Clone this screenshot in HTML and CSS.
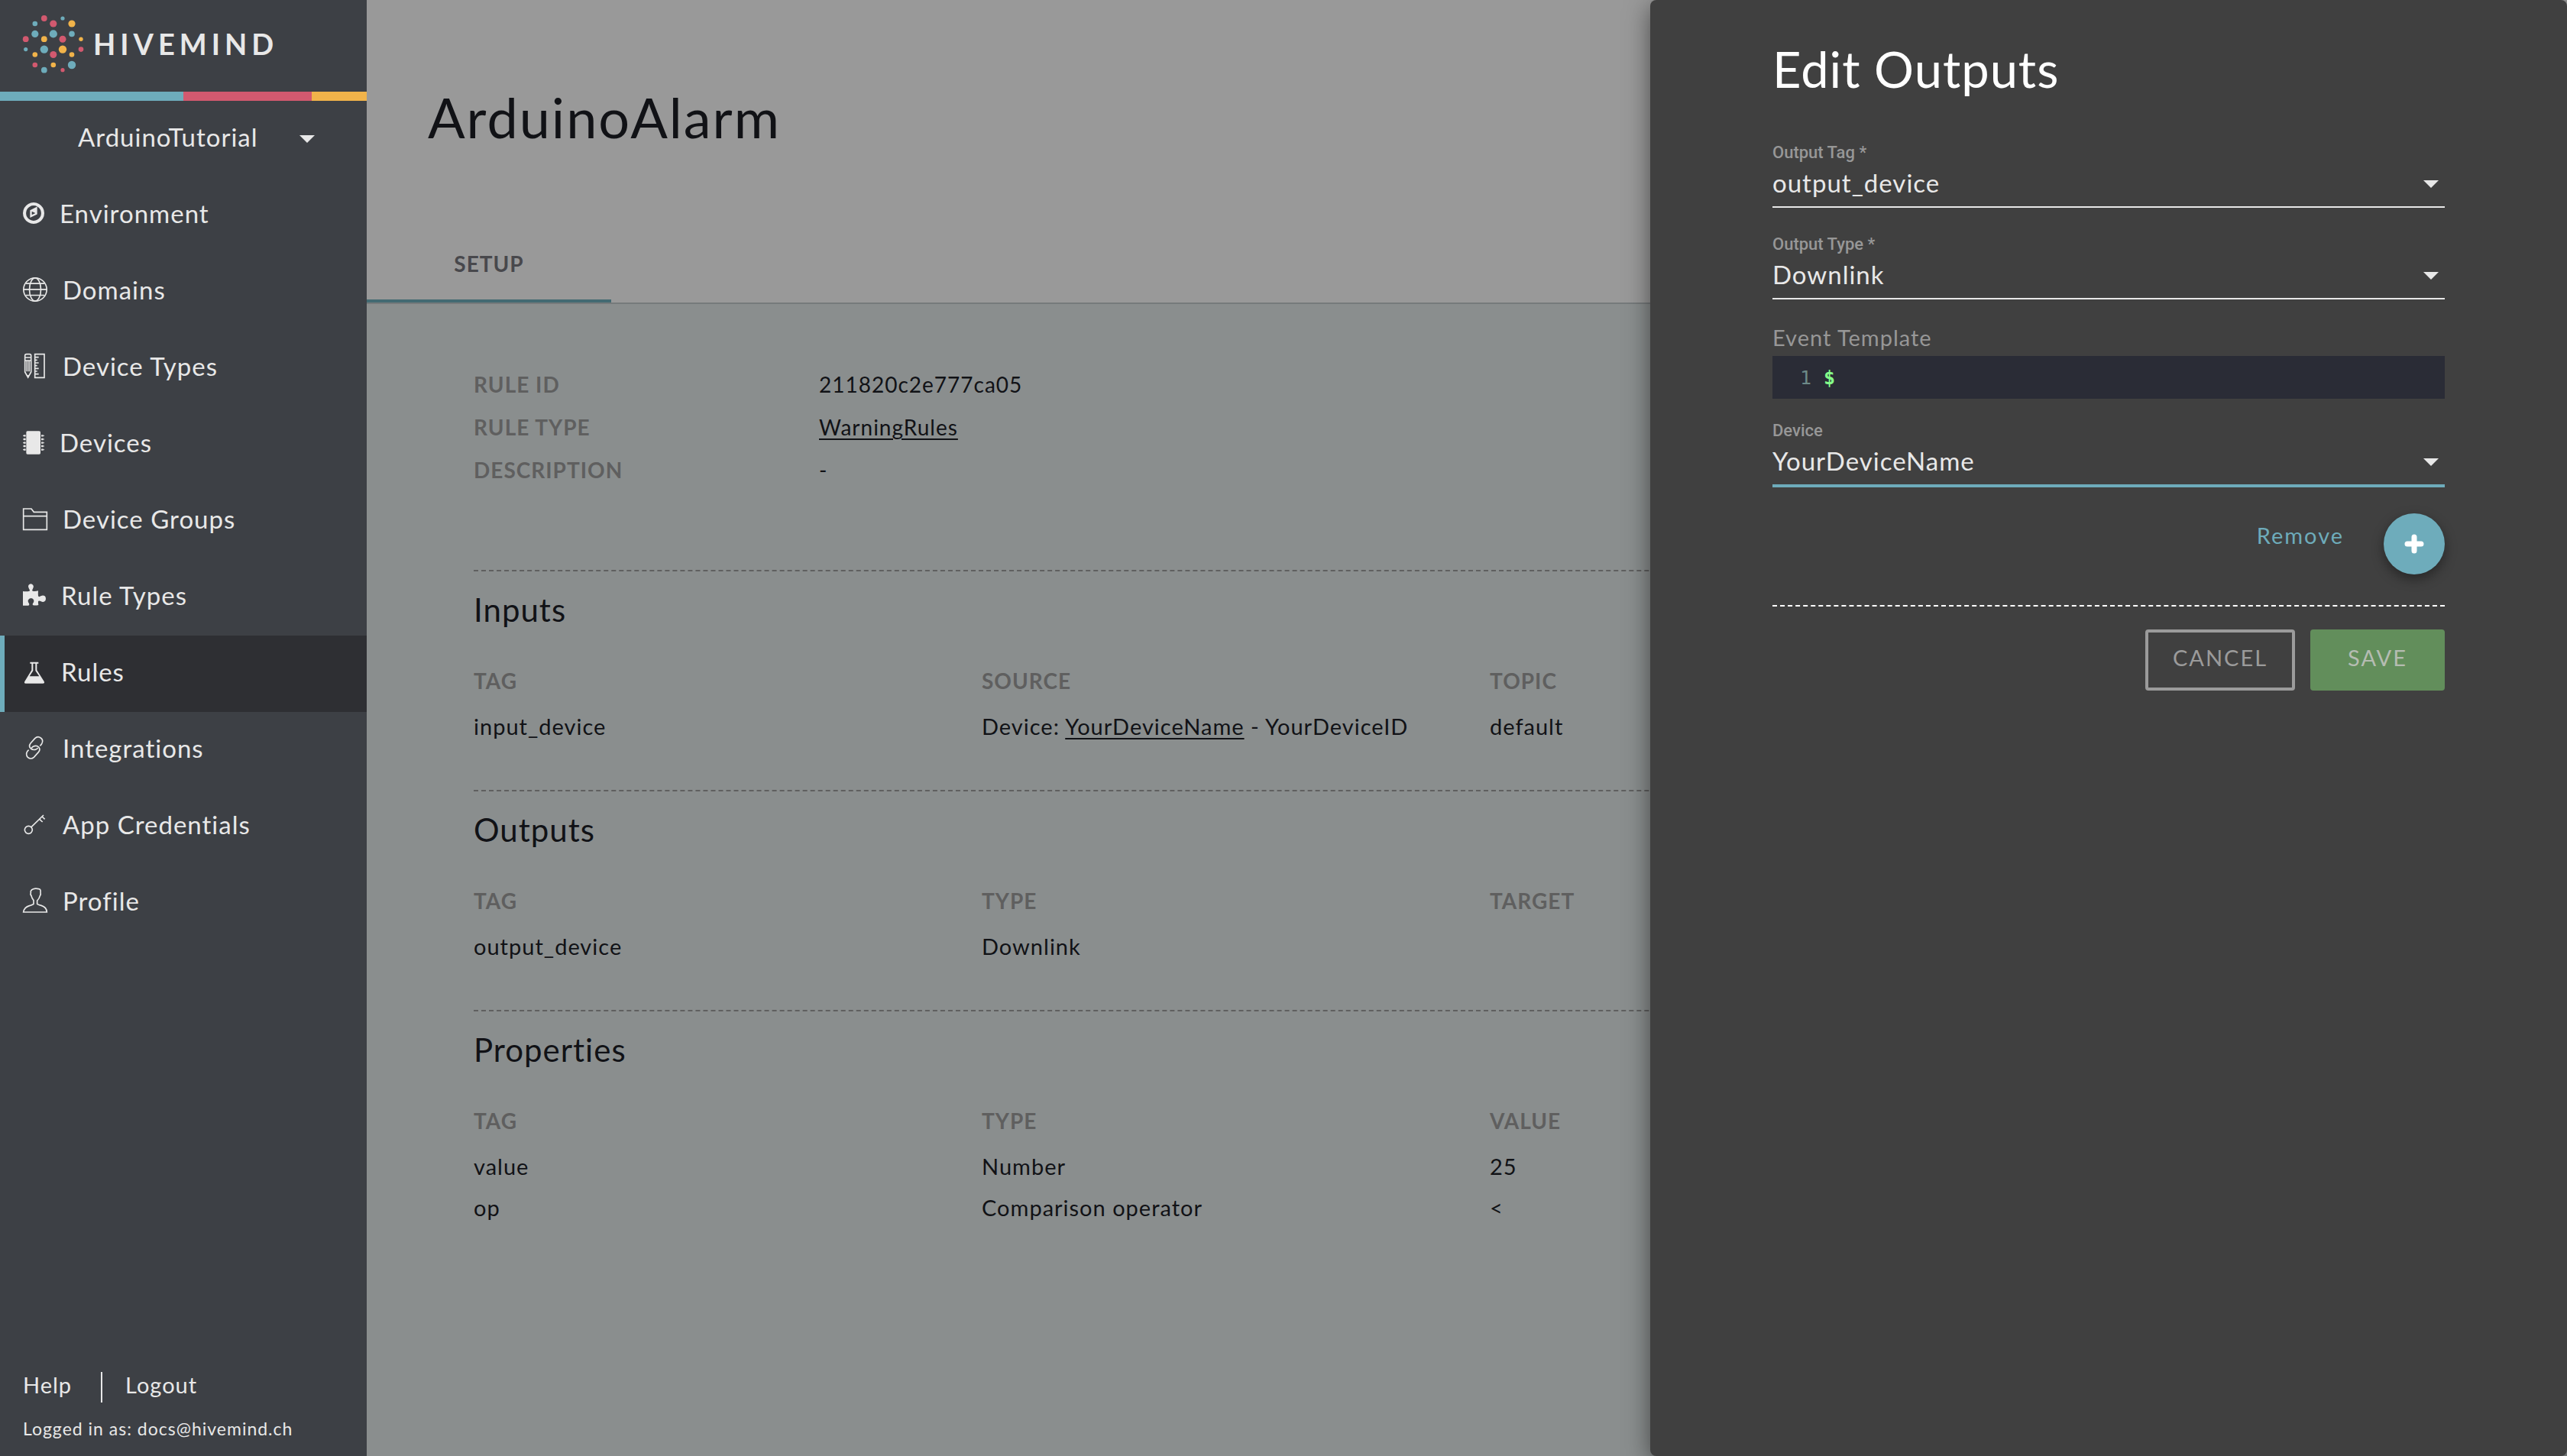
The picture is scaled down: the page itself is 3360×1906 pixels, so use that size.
FILE: index.html
```html
<!DOCTYPE html>
<html lang="en">
<head>
<meta charset="utf-8">
<title>Hivemind – ArduinoAlarm</title>
<link rel="stylesheet" href="styles.css">
</head>
<body>
<div class="app">
  <aside class="sidebar">
    <a class="brand" href="#">
      <svg class="brand-mark" viewBox="29 19 82 78" aria-hidden="true">
        <g fill="#d2596f"><circle cx="57.8" cy="24" r="3.9"/><circle cx="69.8" cy="31" r="4.6"/><circle cx="33.7" cy="51.2" r="3.9"/><circle cx="82" cy="51.2" r="4.5"/><circle cx="106" cy="64.6" r="3.3"/><circle cx="69.8" cy="71.5" r="4.5"/><circle cx="45.8" cy="85" r="3.3"/><circle cx="82" cy="91.7" r="2.6"/></g>
        <g fill="#6eacbb"><circle cx="82" cy="24" r="2.6"/><circle cx="45.8" cy="31" r="3.3"/><circle cx="45.8" cy="44.4" r="4.6"/><circle cx="69.8" cy="44.4" r="5.1"/><circle cx="94" cy="44.4" r="3.8"/><circle cx="33.7" cy="64.6" r="2.6"/><circle cx="57.8" cy="64.6" r="5.2"/><circle cx="94" cy="85" r="5.2"/><circle cx="57.8" cy="91.7" r="3.9"/></g>
        <g fill="#f1b34a"><circle cx="94" cy="31" r="4.6"/><circle cx="57.8" cy="51.2" r="3.9"/><circle cx="106" cy="51.3" r="2.7"/><circle cx="82" cy="64.6" r="5.2"/><circle cx="45.8" cy="71.5" r="3.3"/><circle cx="94" cy="71.5" r="3.3"/><circle cx="69.8" cy="85" r="3.3"/></g>
      </svg>
      <span class="brand-name">HIVEMIND</span>
    </a>
    <div class="stripe"><span class="stripe-teal"></span><span class="stripe-pink"></span><span class="stripe-yellow"></span></div>
    <div class="env">
      <select class="env-select" aria-label="Environment"><option>ArduinoTutorial</option></select>
      <svg class="caret env-caret" viewBox="0 0 20 10" aria-hidden="true"><path d="M0 0h20L10 10z"/></svg>
    </div>
    <nav class="nav">
      <a class="nav-item" href="#"><svg class="icon icon-28" viewBox="0 128 1536 1536" fill-rule="evenodd"><path fill="currentColor" d="M640 1024l256-128-256-128v256zm384-591v542l-512 256v-542zm288 463q0-148-73-273t-198-198-273-73-273 73-198 198-73 273 73 273 198 198 273 73 273-73 198-198 73-273zm224 0q0 209-103 385.500t-279.500 279.500-385.500 103-385.500-103-279.500-279.500-103-385.500 103-385.500 279.500-279.500 385.500-103 385.500 103 279.500 279.500 103 385.500z"/></svg>Environment</a>
      <a class="nav-item" href="#"><svg class="icon" viewBox="90 396 96 96"><g class="line"><circle cx="138" cy="444" r="45.500"/><ellipse cx="138" cy="444" rx="22.500" ry="45.500"/><path d="M92 443.500h92M101 420.500h74M101 466.500h74"/></g></svg>Domains</a>
      <a class="nav-item" href="#"><svg class="icon" viewBox="90 696 96 96"><g class="line"><path d="M98 768V704q0-6 6-6h12q6 0 6 6v64l-12 21zM98 711h24M98 723h24M106 724v42M114 724v42"/><path d="M137 698h37v92h-37zM137 710h15M137 721h9M137 732h15M137 743h9M137 754h15M137 765h9M137 776h15"/></g><path fill="currentColor" d="M105 780h10l-5 11z"/></svg>Device Types</a>
      <a class="nav-item" href="#"><svg class="icon icon-28" viewBox="90 999 84 96"><rect x="103" y="1003" width="56" height="91" rx="5" fill="currentColor"/><path fill="none" stroke="currentColor" stroke-width="7" d="M93 1021h8M93 1035h8M93 1049h8M93 1062h8M93 1076h8M162 1021h8M162 1035h8M162 1049h8M162 1062h8M162 1076h8"/><path fill="none" stroke="currentColor" stroke-width="3" d="M90 1021h4M90 1035h4M90 1049h4M90 1062h4M90 1076h4M170 1021h4M170 1035h4M170 1049h4M170 1062h4M170 1076h4"/></svg>Devices</a>
      <a class="nav-item" href="#"><svg class="icon" viewBox="90 1299 96 96"><path class="line" d="M92 1308h31l10 13h51v69H92zM92 1337h92"/></svg>Device Groups</a>
      <a class="nav-item" href="#"><svg class="icon icon-30" viewBox="90 99 90 96"><path fill="currentColor" d="M90 132q14 2 26-1 3-3-2-9-5-9-2-14 4-5 9-5t9 5q4 5-1 14-5 6-1 9 10 2 22-1-1 11 0 21 3 5 10 0 8-5 15-1 5 4 5 11t-5 11q-7 4-15-1-8-4-10 1-1 6 1 14-9 3-21 1-4-3-1-7 5-6 4-13-3-8-11-8t-12 8q-1 7 4 13 3 5-2 8H90z"/></svg>Rule Types</a>
      <a class="nav-item active" href="#" aria-current="page"><svg class="icon icon-30" viewBox="90 399 90 96"><path fill="currentColor" fill-rule="evenodd" d="M118 410h33v6h-6v26l28 44q4 8-5 8h-67q-8 0-4-8l27-44v-26h-6zM130 416v28l-14 22h38l-15-22v-28z"/></svg>Rules</a>
      <a class="nav-item" href="#"><svg class="icon" viewBox="90 699 96 96"><g class="line"><path d="M157 739q4-3 7-8 8-14-4-23-12-9-23 2l-17 19q-9 12 1 21 8 6 17 4 6-1 11-7"/><path d="M113 755q-2 1-5 5-9 13 1 24 12 10 24 0l18-20q9-11 1-20-7-7-17-4-6 1-12 8"/></g></svg>Integrations</a>
      <a class="nav-item" href="#"><svg class="icon" viewBox="90 999 96 96"><g class="line"><circle cx="112" cy="1069" r="15"/><path d="M123 1058l48-47M165 1017l11 10M155 1027l12 11"/></g></svg>App Credentials</a>
      <a class="nav-item" href="#"><svg class="icon" viewBox="90 1297 96 96"><path class="line" d="M92 1390h92q-1-20-22-26-15-4-16-6v-13q9-9 11-19 4-6 2-13 2-14-7-14-12-3-21 0-13 5-10 15-3 5 2 12 2 10 9 18v14q-2 3-16 7-21 6-24 25z"/></svg>Profile</a>
    </nav>
    <footer class="side-foot">
      <div class="foot-links"><a href="#">Help</a><a class="logout" href="#">Logout</a></div>
      <p class="logged">Logged in as: docs@hivemind.ch</p>
    </footer>
  </aside>

  <main class="main">
    <header class="page-head">
      <h1>ArduinoAlarm</h1>
      <div class="tabs" role="tablist"><button class="tab" type="button" role="tab" aria-selected="true">SETUP</button></div>
    </header>
    <div class="page-body">
      <dl class="facts">
        <dt>RULE ID</dt><dd>211820c2e777ca05</dd>
        <dt>RULE TYPE</dt><dd><a href="#">WarningRules</a></dd>
        <dt>DESCRIPTION</dt><dd>-</dd>
      </dl>
      <section class="block">
        <h2>Inputs</h2>
        <table>
          <thead><tr><th>TAG</th><th>SOURCE</th><th>TOPIC</th><th></th></tr></thead>
          <tbody><tr><td>input_device</td><td>Device: <a href="#">YourDeviceName</a> - YourDeviceID</td><td>default</td><td></td></tr></tbody>
        </table>
      </section>
      <section class="block">
        <h2>Outputs</h2>
        <table>
          <thead><tr><th>TAG</th><th>TYPE</th><th>TARGET</th><th></th></tr></thead>
          <tbody><tr><td>output_device</td><td>Downlink</td><td></td><td></td></tr></tbody>
        </table>
      </section>
      <section class="block">
        <h2>Properties</h2>
        <table>
          <thead><tr><th>TAG</th><th>TYPE</th><th>VALUE</th><th></th></tr></thead>
          <tbody>
            <tr><td>value</td><td>Number</td><td>25</td><td></td></tr>
            <tr><td>op</td><td>Comparison operator</td><td>&lt;</td><td></td></tr>
          </tbody>
        </table>
      </section>
    </div>
  </main>

  <form class="panel">
    <h2 class="panel-title">Edit Outputs</h2>
    <div class="field">
      <label for="tag">Output Tag *</label>
      <div class="pick"><select id="tag"><option>output_device</option></select><svg class="caret" viewBox="0 0 20 10" aria-hidden="true"><path d="M0 0h20L10 10z"/></svg></div>
    </div>
    <div class="field">
      <label for="type">Output Type *</label>
      <div class="pick"><select id="type"><option>Downlink</option></select><svg class="caret" viewBox="0 0 20 10" aria-hidden="true"><path d="M0 0h20L10 10z"/></svg></div>
    </div>
    <div class="template">
      <label for="template">Event Template</label>
      <div class="code"><span class="line-no">1</span><textarea id="template" rows="1" spellcheck="false">$</textarea></div>
    </div>
    <div class="field focused">
      <label for="device">Device</label>
      <div class="pick"><select id="device"><option>YourDeviceName</option></select><svg class="caret" viewBox="0 0 20 10" aria-hidden="true"><path d="M0 0h20L10 10z"/></svg></div>
    </div>
    <div class="row-actions">
      <button class="remove" type="button">Remove</button>
      <button class="add" type="button" aria-label="Add output"><svg viewBox="0 0 26 26" aria-hidden="true"><path d="M13 4v18M4 13h18" stroke="#fff" stroke-width="7" stroke-linecap="round"/></svg></button>
    </div>
    <div class="form-actions">
      <button class="btn cancel" type="button">CANCEL</button>
      <button class="btn save" type="submit">SAVE</button>
    </div>
  </form>
</div>
</body>
</html>
```
FILE: styles.css
```css
* { box-sizing: border-box; }

body {
  margin: 0;
  font-family: Lato, "Liberation Sans", sans-serif;
  font-size: 28px;
  letter-spacing: 1px;
  color: #111216;
  background: #8a8e8e;
}

h1, h2, p, dl, dd { margin: 0; font-weight: 400; }
a { color: inherit; }
button, select, textarea { font: inherit; letter-spacing: inherit; color: inherit; border: 0; border-radius: 0; margin: 0; padding: 0; background: none; }
select { appearance: none; outline: 0; }

.app { position: relative; display: flex; min-height: 100vh; overflow: hidden; }

/* Sidebar */
.sidebar { flex: 0 0 480px; display: flex; flex-direction: column; background: #3d4045; color: #e8e8e8; }
.sidebar a { text-decoration: none; }
.brand { display: flex; align-items: center; gap: 11px; height: 120px; padding: 0 0 4px 29px; }
.brand-mark { width: 82px; height: 78px; }
.brand-name { font-size: 38px; line-height: 44px; padding-bottom: 2px; font-weight: 700; letter-spacing: 6px; }
.stripe { display: flex; height: 12px; }
.stripe-teal { flex: 50; background: #6eacbb; }
.stripe-pink { flex: 35; background: #d2596f; }
.stripe-yellow { flex: 15; background: #f1b34a; }
.env { position: relative; height: 100px; }
.env-select { width: 100%; height: 94px; padding-left: 102px; font-size: 33px; }
.caret { width: 20px; height: 10px; fill: #e8e8e8; position: absolute; right: 8px; top: 50%; margin-top: -5px; pointer-events: none; }
.env-caret { right: 68px; }
.nav-item { display: flex; align-items: center; gap: 20px; height: 100px; padding: 0 0 6px 30px; font-size: 33px; }
.nav-item.active { background: #2e2f33; box-shadow: inset 6px 0 #6eacbb; }
.icon { flex: none; width: 32px; height: 32px; overflow: visible; }
.icon-28 { width: 28px; }
.icon-30 { width: 30px; }
.line { fill: none; stroke: currentColor; stroke-width: 5; }
.side-foot { margin-top: auto; padding: 0 30px 18px; }
.foot-links { display: flex; height: 40px; font-size: 29px; line-height: 34px; }
.logout { margin-left: 38px; padding-left: 30px; border-left: 2px solid #e8e8e8; }
.logged { margin-top: 16px; font-size: 23px; line-height: 36px; }

/* Page */
.main { flex: 1; min-width: 0; }
.page-head { background: #999; border-bottom: 2px solid #767a7b; }
h1 { padding: 111px 80px 0; font-size: 72px; line-height: 84px; letter-spacing: 2px; }
.tabs { padding-top: 105px; }
.tab { display: block; width: 320px; height: 96px; padding-bottom: 6px; font-weight: 700; color: #48484c; box-shadow: inset 0 -4px #436a72; }
.page-body { padding: 77px 80px 80px 140px; }
.facts { display: grid; grid-template-columns: 452px 1fr; line-height: 56px; margin-bottom: 103px; }
dt, th { font-weight: 700; color: #5f5f5f; }
.page-body a { text-underline-offset: 4px; text-decoration-thickness: 2px; }
.block { padding: 25px 0 56px; border-top: 2px dashed #5f5f5f; }
.block h2 { font-size: 42px; line-height: 50px; margin-bottom: 41px; }
table { width: 100%; table-layout: fixed; border-collapse: collapse; line-height: 54px; text-align: left; }
th, td { padding: 0; white-space: nowrap; }
th { padding-bottom: 6px; }
td { font-size: 29px; }

/* Edit drawer, over the page */
.panel { position: absolute; top: 0; right: 0; bottom: 0; width: 1200px; padding: 52px 160px 0; background: #404040; color: #e8e8e8; border-radius: 8px; box-shadow: 0 8px 32px rgba(0, 0, 0, .5); }
.panel-title { font-size: 65px; line-height: 76px; margin-bottom: 60px; color: #fff; }
.field { margin-bottom: 36px; }
.field label { display: block; font-family: Roboto, sans-serif; font-size: 22px; font-weight: 500; line-height: 24px; letter-spacing: 0; color: #979797; }
.pick { position: relative; border-bottom: 2px solid #e8e8e8; }
.pick select { display: block; width: 100%; height: 58px; padding-bottom: 4px; font-size: 33px; }
.focused { margin: 30px 0 34px; }
.focused .pick { border-bottom: 4px solid #6eacbb; }
.template { margin-top: -4px; }
.template label { display: block; font-size: 29px; line-height: 36px; margin-bottom: 6px; color: #979797; }
.code { display: flex; align-items: center; gap: 16px; height: 56px; padding: 2px 0 0 36px; background: #2a2c36; font-family: "DejaVu Sans Mono", monospace; font-size: 25px; letter-spacing: 0; line-height: 36px; }
.line-no { color: #6d8a88; }
.code textarea { flex: 1; height: 36px; resize: none; outline: 0; overflow: hidden; font-weight: 700; color: #84ff8a; }
.row-actions { display: flex; justify-content: flex-end; gap: 52px; padding-bottom: 40px; border-bottom: 2px dashed #fff; }
.remove { height: 56px; font-size: 29px; color: #6eacbb; letter-spacing: 2px; }
.add { display: flex; align-items: center; justify-content: center; width: 80px; height: 80px; border-radius: 50%; background: #6eacbb; box-shadow: 0 6px 16px rgba(0, 0, 0, .4); }
.add svg { width: 26px; height: 26px; }
.form-actions { display: flex; justify-content: flex-end; gap: 20px; margin-top: 30px; }
.btn { height: 80px; border-radius: 4px; font-size: 29px; letter-spacing: 2px; padding-bottom: 8px; }
.cancel { width: 196px; border: 4px solid #9b9b9b; color: #9b9b9b; }
.save { width: 176px; background: #628e5b; color: #b5bcb2; }
```
